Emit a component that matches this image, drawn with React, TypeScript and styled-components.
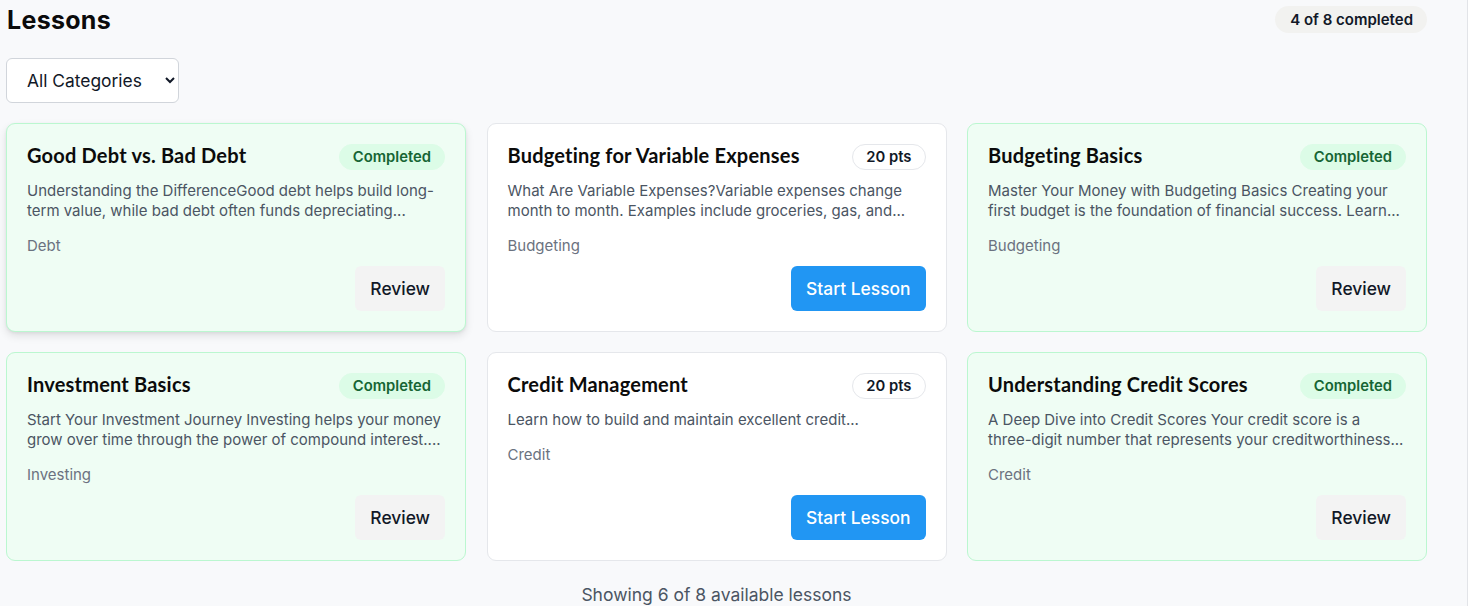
import styled, { createGlobalStyle } from 'styled-components';

const GlobalStyle = createGlobalStyle`
  html, body {
    margin: 0;
    padding: 0;
    background: #ffffff;
  }
  body {
    font-family: Inter, 'Noto Sans', sans-serif;
    color: #111827;
  }
`;

const Shell = styled.div`
  display: flex;
  min-height: 606px;
`;

const Main = styled.main`
  width: 1468px;
  box-sizing: border-box;
  background: #f8f9fb;
  border-right: 1px solid #e2e4e8;
  padding: 4px 40px 0 6px;
`;

const Header = styled.div`
  display: flex;
  align-items: center;
  justify-content: space-between;
  height: 32px;
`;

const Title = styled.h1`
  margin: 0 0 0 1px;
  font-family: Inter, sans-serif;
  font-size: 25px;
  font-weight: 700;
  letter-spacing: 0.3px;
  color: #0b0b0b;
`;

const CountBadge = styled.span`
  background: #f2f2f0;
  border-radius: 14px;
  padding: 4px 14px 4px 15px;
  font-size: 15px;
  font-weight: 600;
  color: #111827;
  margin-top: -2px;
`;

const Select = styled.select`
  margin-top: 22px;
  width: 173px;
  height: 45px;
  padding: 0 10px 0 16px;
  border: 1px solid #d1d5db;
  border-radius: 6px;
  background: #ffffff;
  font-family: Inter, sans-serif;
  font-size: 17.4px;
  color: #111827;
`;

const Grid = styled.div`
  display: grid;
  grid-template-columns: repeat(3, 460px);
  gap: 20px 20.5px;
  margin-top: 20px;
`;

const Card = styled.div<{ $done?: boolean; $raised?: boolean }>`
  box-sizing: border-box;
  height: 209px;
  display: flex;
  flex-direction: column;
  padding: 20px;
  border-radius: 9px;
  border: 1px solid ${({ $done }) => ($done ? '#bbf7d0' : '#e5e7eb')};
  background: ${({ $done }) => ($done ? '#effdf4' : '#ffffff')};
  box-shadow: ${({ $raised }) =>
    $raised ? '0 4px 8px rgba(0, 0, 0, 0.1), 0 1px 3px rgba(0,0,0,0.06)' : 'none'};
`;

const CardTop = styled.div`
  display: flex;
  justify-content: space-between;
  align-items: flex-start;
  gap: 12px;
`;

const CardTitle = styled.h3`
  margin: 0;
  font-family: Lato, Inter, sans-serif;
  font-size: 20px;
  font-weight: 700;
  letter-spacing: 0.2px;
  line-height: 22px;
  color: #0b0b0b;
`;

const Pill = styled.span<{ $done?: boolean }>`
  flex-shrink: 0;
  height: 26px;
  box-sizing: border-box;
  display: inline-flex;
  align-items: center;
  padding: 0 13px;
  border-radius: 13px;
  font-size: 14.8px;
  font-weight: 600;
  background: ${({ $done }) => ($done ? '#dcfce7' : '#ffffff')};
  color: ${({ $done }) => ($done ? '#166534' : '#111827')};
  border: 1px solid ${({ $done }) => ($done ? '#dcfce7' : '#e5e7eb')};
`;

const Desc = styled.p`
  margin: 11px 0 0;
  font-size: 15px;
  line-height: 20px;
  color: #4b5563;
`;

const Category = styled.div`
  margin-top: 15px;
  font-size: 15px;
  color: #6b7280;
`;

const Actions = styled.div`
  margin-top: auto;
  display: flex;
  justify-content: flex-end;
`;

const ActionButton = styled.button<{ $primary?: boolean }>`
  height: 45px;
  padding: 0 15px;
  border: none;
  border-radius: 6px;
  font-family: Inter, sans-serif;
  font-size: 17.4px;
  font-weight: 500;
  cursor: pointer;
  background: ${({ $primary }) => ($primary ? '#2196f3' : '#f3f3f3')};
  color: ${({ $primary }) => ($primary ? '#ffffff' : '#111827')};
`;

const Footer = styled.p`
  margin: 23px 0 0;
  text-align: center;
  font-size: 17.5px;
  color: #4b5563;
`;

type Lesson = {
  title: string;
  desc: string;
  category: string;
  done: boolean;
};

const lessons: Lesson[] = [
  {
    title: 'Good Debt vs. Bad Debt',
    desc: 'Understanding the DifferenceGood debt helps build long-term value, while bad debt often funds depreciating...',
    category: 'Debt',
    done: true,
  },
  {
    title: 'Budgeting for Variable Expenses',
    desc: 'What Are Variable Expenses?Variable expenses change month to month. Examples include groceries, gas, and...',
    category: 'Budgeting',
    done: false,
  },
  {
    title: 'Budgeting Basics',
    desc: 'Master Your Money with Budgeting Basics Creating your first budget is the foundation of financial success. Learn...',
    category: 'Budgeting',
    done: true,
  },
  {
    title: 'Investment Basics',
    desc: 'Start Your Investment Journey Investing helps your money grow over time through the power of compound interest....',
    category: 'Investing',
    done: true,
  },
  {
    title: 'Credit Management',
    desc: 'Learn how to build and maintain excellent credit...',
    category: 'Credit',
    done: false,
  },
  {
    title: 'Understanding Credit Scores',
    desc: 'A Deep Dive into Credit Scores Your credit score is a three-digit number that represents your creditworthiness...',
    category: 'Credit',
    done: true,
  },
];

export default function App() {
  return (
    <>
      <GlobalStyle />
      <Shell>
        <Main>
          <Header>
            <Title>Lessons</Title>
            <CountBadge>4 of 8 completed</CountBadge>
          </Header>

          <Select defaultValue="all">
            <option value="all">All Categories</option>
            <option value="budgeting">Budgeting</option>
            <option value="credit">Credit</option>
            <option value="debt">Debt</option>
            <option value="investing">Investing</option>
          </Select>

          <Grid>
            {lessons.map((l, idx) => (
              <Card key={l.title} $done={l.done} $raised={idx === 0}>
                <CardTop>
                  <CardTitle>{l.title}</CardTitle>
                  <Pill $done={l.done}>{l.done ? 'Completed' : '20 pts'}</Pill>
                </CardTop>
                <Desc>{l.desc}</Desc>
                <Category>{l.category}</Category>
                <Actions>
                  <ActionButton $primary={!l.done}>
                    {l.done ? 'Review' : 'Start Lesson'}
                  </ActionButton>
                </Actions>
              </Card>
            ))}
          </Grid>

          <Footer>Showing 6 of 8 available lessons</Footer>
        </Main>
      </Shell>
    </>
  );
}
